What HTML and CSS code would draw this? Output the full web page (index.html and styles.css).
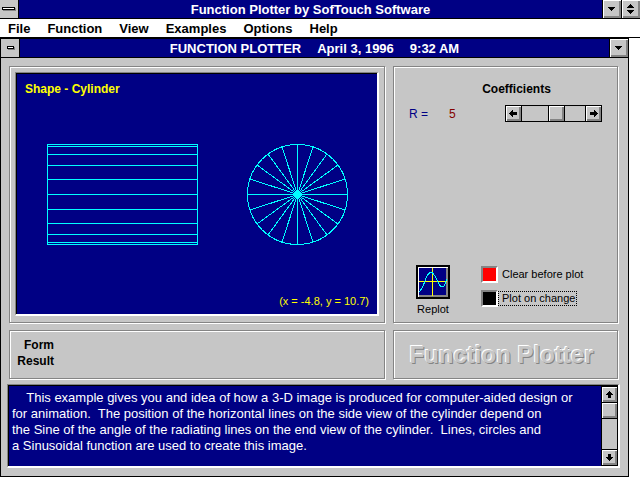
FILE: index.html
```html
<!DOCTYPE html>
<html lang="en">
<head>
<meta charset="utf-8">
<title>Function Plotter by SofTouch Software</title>
<link rel="stylesheet" href="styles.css">
</head>
<body>
<header class="titlebar">
  <button class="sysmenu" aria-label="Application menu">
    <svg width="18" height="18" shape-rendering="crispEdges"><path fill="#848484" d="M3 8h13v3H3z"/><path d="M2 7h13v3H2z"/><path fill="#fff" d="M3 8h11v1H3z"/></svg>
  </button>
  <h1 class="caption">Function Plotter by SofTouch Software</h1>
  <button class="winbtn" aria-label="Minimize">
    <svg width="18" height="18" shape-rendering="crispEdges"><path d="M5 7h7v1H5zM6 8h5v1H6zM7 9h3v1H7zM8 10h1v1H8z"/></svg>
  </button>
  <button class="winbtn" aria-label="Restore">
    <svg width="18" height="18" shape-rendering="crispEdges"><path d="M8 4h1v1H8zM7 5h3v1H7zM6 6h5v1H6zM5 7h7v1H5zM5 10h7v1H5zM6 11h5v1H6zM7 12h3v1H7zM8 13h1v1H8z"/></svg>
  </button>
</header>
<nav class="menubar">
  <button>File</button><button>Function</button><button>View</button><button>Examples</button><button>Options</button><button>Help</button>
</nav>
<main class="window">
  <div class="titlebar">
    <button class="sysmenu" aria-label="Window menu">
      <svg width="18" height="18" shape-rendering="crispEdges"><path fill="#848484" d="M7 8h7v3H7z"/><path d="M6 7h7v3H6z"/><path fill="#fff" d="M7 8h5v1H7z"/></svg>
    </button>
    <h2 class="caption"><span>FUNCTION PLOTTER</span><span>April 3, 1996</span><span>9:32 AM</span></h2>
    <button class="winbtn" aria-label="Minimize window">
      <svg width="18" height="18" shape-rendering="crispEdges"><path d="M5 7h7v1H5zM6 8h5v1H6zM7 9h3v1H7zM8 10h1v1H8z"/></svg>
    </button>
  </div>
  <div class="panels">
    <section class="frame plot-frame">
      <div class="sunken plot">
        <div class="shape">Shape - Cylinder</div>
        <svg class="drawing" width="302" height="102" fill="none" stroke="#00ffff" shape-rendering="crispEdges">
          <path d="M0.5 0.5h150v100h-150zM0 2.5h151M0 10.5h151M0 21.5h151M0 35.5h151M0 50.5h151M0 65.5h151M0 79.5h151M0 90.5h151M0 98.5h151"/>
          <circle cx="250.5" cy="50.5" r="50"/>
          <path d="M200.5 50.5h100M250.5 0.5v100M203 35l95 31M203 66l95-31M210 21l81 59M210 80l81-59M221 10l59 81M221 91l59-81M235 3l31 95M235 98l31-95"/>
        </svg>
        <div class="coords">(x = -4.8, y = 10.7)</div>
      </div>
    </section>
    <section class="frame controls">
      <h3 class="heading">Coefficients</h3>
      <div class="coef">
        <label class="coef-name" for="r">R =</label>
        <output class="coef-value" for="r">5</output>
        <div class="scroll scroll-h">
          <button aria-label="Decrease R"><svg width="15" height="15" shape-rendering="crispEdges"><path d="M3 7h1v1H3zM4 6h1v3H4zM5 5h1v5H5zM6 4h1v7H6zM7 6h4v3H7z"/></svg></button>
          <input id="r" type="range" min="0" max="9" value="5">
          <button aria-label="Increase R"><svg width="15" height="15" shape-rendering="crispEdges"><path d="M11 7h1v1h-1zM10 6h1v3h-1zM9 5h1v5H9zM8 4h1v7H8zM4 6h4v3H4z"/></svg></button>
        </div>
      </div>
      <div class="actions">
        <div class="replot">
          <button id="replot" class="replot-btn" aria-labelledby="replot-label">
            <svg width="28" height="28" fill="none" shape-rendering="crispEdges"><path stroke="#ffff00" d="M0 13.5h28M13.5 0v28"/><path stroke="#00ffff" d="M0 24C2 22 3 21 4 18C7 11 8 4.500 12 4.500C17 4.500 19 19 23 19C26 19 26 15 28 11"/></svg>
          </button>
          <label id="replot-label" for="replot">Replot</label>
        </div>
        <div class="checks">
          <div class="check"><input type="checkbox" id="clear" checked><label for="clear">Clear before plot</label></div>
          <div class="check"><input type="checkbox" id="onchange"><label class="focused" for="onchange">Plot on change</label></div>
        </div>
      </div>
    </section>
    <section class="frame result">
      <div>Form</div>
      <div>Result</div>
    </section>
    <section class="frame brand">Function Plotter</section>
  </div>
  <div class="sunken notes">
    <textarea readonly aria-label="Description">    This example gives you and idea of how a 3-D image is produced for computer-aided design or
for animation.  The position of the horizontal lines on the side view of the cylinder depend on
the Sine of the angle of the radiating lines on the end view of the cylinder.  Lines, circles and
a Sinusoidal function are used to create this image.</textarea>
    <div class="scroll scroll-v">
      <button aria-label="Scroll up"><svg width="15" height="15" shape-rendering="crispEdges"><path d="M7 4h1v1H7zM6 5h3v1H6zM5 6h5v1H5zM4 7h7v1H4zM6 8h3v3H6z"/></svg></button>
      <input type="range" min="0" max="10" value="0" aria-label="Scroll position">
      <button aria-label="Scroll down"><svg width="15" height="15" shape-rendering="crispEdges"><path d="M6 4h3v3H6zM4 7h7v1H4zM5 8h5v1H5zM6 9h3v1H6zM7 10h1v1H7z"/></svg></button>
    </div>
  </div>
</main>
</body>
</html>
```
FILE: styles.css
```css
* { box-sizing: border-box; }
body {
  margin: 0;
  background: #fff;
  color: #000;
  font: 12px/16px "Liberation Sans", Arial, sans-serif;
}
button, input, textarea {
  margin: 0;
  padding: 0;
  border: 0;
  border-radius: 0;
  font: inherit;
  color: inherit;
}
svg { display: block; }
h1, h2, h3 { margin: 0; }

.titlebar {
  display: flex;
  height: 19px;
  background: #000084;
  border-bottom: 1px solid #000;
}
.sysmenu {
  width: 19px;
  background: #c6c6c6;
  border-right: 1px solid #000;
}
.winbtn {
  width: 19px;
  background: #c6c6c6;
  border-left: 1px solid #000;
  box-shadow: inset 1px 1px #fff, inset -2px -2px #848484;
}
.caption {
  display: flex;
  flex: 1;
  justify-content: center;
  gap: 16px;
  color: #fff;
  font-size: 13px;
  line-height: 19px;
}
.menubar {
  display: flex;
  gap: 1px;
  height: 19px;
  border-bottom: 1px solid #000;
}
.menubar button {
  padding: 0 8px;
  background: none;
  font-size: 13px;
  font-weight: bold;
  line-height: 17px;
}

.window {
  margin-right: 11px;
  background: #c6c6c6;
  border: 1px solid #000;
}
.panels {
  display: grid;
  grid-template-columns: 376fr 225fr;
  gap: 7px 8px;
  padding: 8px 10px 5px 8px;
}
.frame {
  border: 1px solid #848484;
  box-shadow: 1px 1px #fff, inset 1px 1px #fff;
}
.sunken {
  background: #000084;
  border: 2px solid #fff;
  border-top: 1px solid #848484;
  border-left: 1px solid #848484;
  box-shadow: inset 1px 1px #000;
}
.plot-frame { padding: 5px 5px 6px; }
.plot {
  display: flex;
  flex-direction: column;
  height: 244px;
  padding: 8px 8px 5px 9px;
  color: #ffff00;
}
.shape { font-weight: bold; }
.drawing { margin: 47px 0 0 22px; }
.coords {
  margin-top: auto;
  font-size: 11px;
  text-align: right;
}

.controls {
  display: flex;
  flex-direction: column;
}
.heading {
  margin: 14px 0 8px 22px;
  font-size: 12px;
  text-align: center;
}
.coef {
  display: flex;
  align-items: center;
  padding: 0 15px;
}
.coef-name { width: 40px; color: #000084; }
.coef-value { color: #840000; }
.scroll {
  display: flex;
  background: #c6c6c6;
  border: 1px solid #000;
}
.scroll button {
  width: 15px;
  height: 15px;
  background: #c6c6c6;
  box-shadow: inset 1px 1px #fff, inset -2px -2px #848484;
}
.scroll input {
  appearance: none;
  flex: 1;
  min-width: 0;
  min-height: 0;
  background: none;
}
.scroll input::-webkit-slider-thumb {
  appearance: none;
  width: 17px;
  height: 15px;
  border: 0 solid #000;
  border-width: 0 1px;
  background: #c6c6c6;
  box-shadow: inset 1px 1px #fff, inset -2px -2px #848484;
}
.scroll-h {
  width: 97px;
  height: 17px;
  margin-left: auto;
}
.scroll-h input {
  height: 15px;
  border: 0 solid #000;
  border-width: 0 1px;
}
.actions {
  display: flex;
  gap: 31px;
  margin-top: auto;
  padding: 0 0 5px 22px;
  font-size: 11px;
}
.replot { text-align: center; }
.replot-btn {
  display: block;
  width: 34px;
  height: 34px;
  margin-bottom: 2px;
  padding: 1px;
  background: #000084;
  border: 2px solid #000;
  box-shadow: inset 1px 1px #fff, inset -2px -2px #848484;
}
.checks {
  display: flex;
  flex-direction: column;
  gap: 7px;
  padding-top: 1px;
}
.check {
  display: flex;
  align-items: center;
  height: 17px;
}
.check input {
  appearance: none;
  width: 17px;
  height: 17px;
  background: #000;
  border: 2px solid #fff;
  border-top-color: #848484;
  border-left-color: #848484;
}
.check input:checked { background: #ff0000; }
.check label {
  padding: 0 1px 0 3px;
  border: 1px solid transparent;
  line-height: 13px;
}
.check .focused { border: 1px dotted #000; }

.result {
  height: 49px;
  padding: 6px;
  font-weight: bold;
}
.result div { width: 38px; text-align: right; }
.brand {
  display: flex;
  align-items: center;
  justify-content: center;
  padding-right: 8px;
  color: #c6c6c6;
  font-size: 24px;
  font-weight: bold;
  text-shadow: -1px -1px #fff, 1px 1px #848484;
}
.notes {
  display: flex;
  height: 84px;
  margin: 0 8px 8px 6px;
  padding: 1px 0 0 1px;
}
.notes textarea {
  flex: 1;
  min-width: 0;
  padding: 4px 3px;
  background: none;
  color: #fff;
  font-size: 13px;
  line-height: 16px;
  white-space: pre;
  overflow: hidden;
  resize: none;
  outline: 0;
}
.scroll-v {
  flex-direction: column;
  width: 17px;
}
.scroll-v input {
  writing-mode: vertical-lr;
  width: 15px;
  border: 0 solid #000;
  border-width: 1px 0;
}
.scroll-v input::-webkit-slider-thumb {
  width: 15px;
  height: 16px;
  border-width: 0 0 1px;
}
```
